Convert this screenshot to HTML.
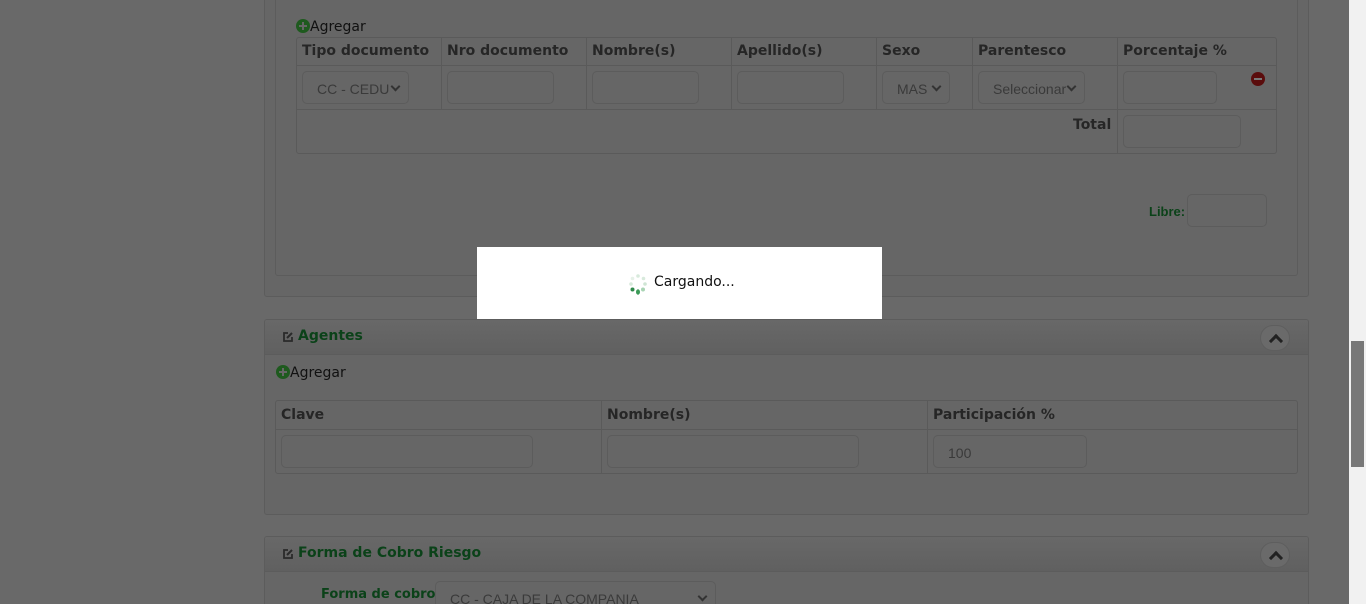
<!DOCTYPE html>
<html style="width:1366px;height:604px;overflow:hidden"><head><meta charset="utf-8"><style>
*{box-sizing:border-box;margin:0;padding:0}
body{width:1366px;height:604px;overflow:hidden;background:#696969;font-family:"DejaVu Sans","Liberation Sans",sans-serif;position:relative}
.a{position:absolute}
.panel{position:absolute;background:#666;border:1px solid #5c5c5c;border-radius:3px;overflow:hidden}
.hdr{position:absolute;left:0;right:0;top:0;height:35px;background:linear-gradient(#686868,#606060);border-bottom:1px solid #5c5c5c}
.ttl{position:absolute;left:17px;top:8px;font-weight:bold;font-size:14px;color:#0b4219}
.tog{position:absolute;right:18px;top:5px;width:30px;height:26px;border-radius:13px;background:#6a6a6a;border:1px solid #5e5e5e}
.tog:after{content:"";position:absolute;left:10px;top:10px;width:7px;height:7px;border-left:3px solid #222;border-top:3px solid #222;transform:rotate(45deg)}
.th{position:absolute;font-weight:bold;font-size:14px;color:#262626;top:0}
.inp{position:absolute;height:33px;border:1px solid #5c5c5c;border-radius:5px;background:#666;font-family:"Liberation Sans",sans-serif;font-size:14px;color:#3a3a3a;padding:9px 0 0 14px;white-space:nowrap;overflow:hidden}
.sel{padding-right:20px}
.sel:after{content:"";position:absolute;right:9px;top:11px;width:5px;height:5px;border-right:2px solid #333;border-bottom:2px solid #333;transform:rotate(45deg)}
.vl{position:absolute;width:1px;background:#5a5a5a}
.hl{position:absolute;height:1px;background:#5a5a5a}
.plus{display:inline-block;width:14px;height:14px;border-radius:7px;background:#1e5a1e;position:relative;vertical-align:-2px}
.plus:before{content:"";position:absolute;left:3px;top:6px;width:8px;height:2px;background:#666}
.plus:after{content:"";position:absolute;left:6px;top:3px;width:2px;height:8px;background:#666}
.ag{position:absolute;font-size:14px;color:#111;font-family:"DejaVu Sans",sans-serif}
</style></head><body>
<div class="panel" style="left:264px;top:-5px;width:1045px;height:302px"></div>
<div class="panel" style="left:275px;top:-5px;width:1023px;height:281px"></div>
<div class="ag" style="left:296px;top:19px"><span class="plus"></span>Agregar</div>
<div class="a" style="left:296px;top:37px;width:981px;height:117px;border:1px solid #5a5a5a;border-radius:3px"></div>
<div class="hl" style="left:297px;top:65px;width:979px"></div>
<div class="hl" style="left:297px;top:109px;width:979px"></div>
<div class="vl" style="left:441px;top:38px;height:71px"></div>
<div class="vl" style="left:586px;top:38px;height:71px"></div>
<div class="vl" style="left:731px;top:38px;height:71px"></div>
<div class="vl" style="left:876px;top:38px;height:71px"></div>
<div class="vl" style="left:972px;top:38px;height:71px"></div>
<div class="vl" style="left:1117px;top:38px;height:115px"></div>
<div class="th" style="left:302px;top:43px">Tipo documento</div>
<div class="th" style="left:447px;top:43px">Nro documento</div>
<div class="th" style="left:592px;top:43px">Nombre(s)</div>
<div class="th" style="left:737px;top:43px">Apellido(s)</div>
<div class="th" style="left:882px;top:43px">Sexo</div>
<div class="th" style="left:978px;top:43px">Parentesco</div>
<div class="th" style="left:1123px;top:43px">Porcentaje %</div>
<div class="inp sel" style="left:302px;top:71px;width:107px">CC - CEDU</div>
<div class="inp" style="left:447px;top:71px;width:107px"></div>
<div class="inp" style="left:592px;top:71px;width:107px"></div>
<div class="inp" style="left:737px;top:71px;width:107px"></div>
<div class="inp sel" style="left:882px;top:71px;width:68px">MAS</div>
<div class="inp sel" style="left:978px;top:71px;width:107px">Seleccionar</div>
<div class="inp" style="left:1123px;top:71px;width:94px"></div>
<div class="a" style="left:1251px;top:72px;width:14px;height:14px;border-radius:7px;background:#5a0c0c"><div class="a" style="left:3px;top:6px;width:8px;height:2px;background:#777"></div></div>
<div class="th" style="left:1073px;top:117px">Total</div>
<div class="inp" style="left:1123px;top:115px;width:118px"></div>
<div class="a" style="left:1149px;top:204px;font-size:13px;font-weight:bold;color:#0b4219;font-family:'Liberation Sans',sans-serif">Libre:</div>
<div class="inp" style="left:1187px;top:194px;width:80px"></div>

<div class="panel" style="left:264px;top:319px;width:1045px;height:196px"><div class="hdr"></div>
<svg class="a" style="left:17px;top:11px" width="12" height="12" viewBox="0 0 12 12"><path d="M6 2H2v8h8V6" fill="none" stroke="#2a2a2a" stroke-width="1.8"/><path d="M5 7l5-5" stroke="#2a2a2a" stroke-width="2"/></svg>
<div class="ttl" style="left:33px">Agentes</div><div class="tog"></div></div>
<div class="ag" style="left:276px;top:365px"><span class="plus"></span>Agregar</div>
<div class="a" style="left:275px;top:400px;width:1023px;height:74px;border:1px solid #5a5a5a;border-radius:3px"></div>
<div class="hl" style="left:276px;top:429px;width:1021px"></div>
<div class="vl" style="left:601px;top:401px;height:72px"></div>
<div class="vl" style="left:927px;top:401px;height:72px"></div>
<div class="th" style="left:281px;top:407px">Clave</div>
<div class="th" style="left:607px;top:407px">Nombre(s)</div>
<div class="th" style="left:933px;top:407px">Participación %</div>
<div class="inp" style="left:281px;top:435px;width:252px"></div>
<div class="inp" style="left:607px;top:435px;width:252px"></div>
<div class="inp" style="left:933px;top:435px;width:154px;padding-left:14px">100</div>

<div class="panel" style="left:264px;top:536px;width:1045px;height:80px"><div class="hdr"></div>
<svg class="a" style="left:17px;top:11px" width="12" height="12" viewBox="0 0 12 12"><path d="M6 2H2v8h8V6" fill="none" stroke="#2a2a2a" stroke-width="1.8"/><path d="M5 7l5-5" stroke="#2a2a2a" stroke-width="2"/></svg>
<div class="ttl" style="left:33px">Forma de Cobro Riesgo</div><div class="tog"></div></div>
<div class="a" style="left:321px;top:587px;font-size:13px;font-weight:bold;color:#0b4219">Forma de cobro</div>
<div class="inp sel" style="left:435px;top:581px;width:281px;padding-top:9px">CC - CAJA DE LA COMPANIA</div>

<div class="a" style="left:1349px;top:0;width:17px;height:604px;background:#f1f1f1"></div>
<div class="a" style="left:1351px;top:341px;width:13px;height:126px;background:#787878"></div>

<div class="a" style="left:477px;top:247px;width:405px;height:72px;background:#fff"></div>
<svg class="a" style="left:627px;top:272px" width="22" height="24" viewBox="0 0 22 24">
<circle cx="11" cy="4" r="1.8" fill="#d8eadc"/><circle cx="16.5" cy="6.5" r="1.8" fill="#d8eadc"/><circle cx="18" cy="12" r="1.8" fill="#cfe5d4"/><circle cx="16" cy="17.5" r="2" fill="#a9d4b4"/><ellipse cx="11" cy="20" rx="2" ry="2.7" fill="#3c9a58"/><circle cx="5.5" cy="17.5" r="2" fill="#2f8a4b"/><circle cx="4" cy="12" r="1.8" fill="#d8eadc"/><circle cx="5.5" cy="6.5" r="1.8" fill="#e6f1e8"/>
</svg>
<div class="a" style="left:654px;top:274px;font-size:14px;color:#111">Cargando...</div>
</body></html>
